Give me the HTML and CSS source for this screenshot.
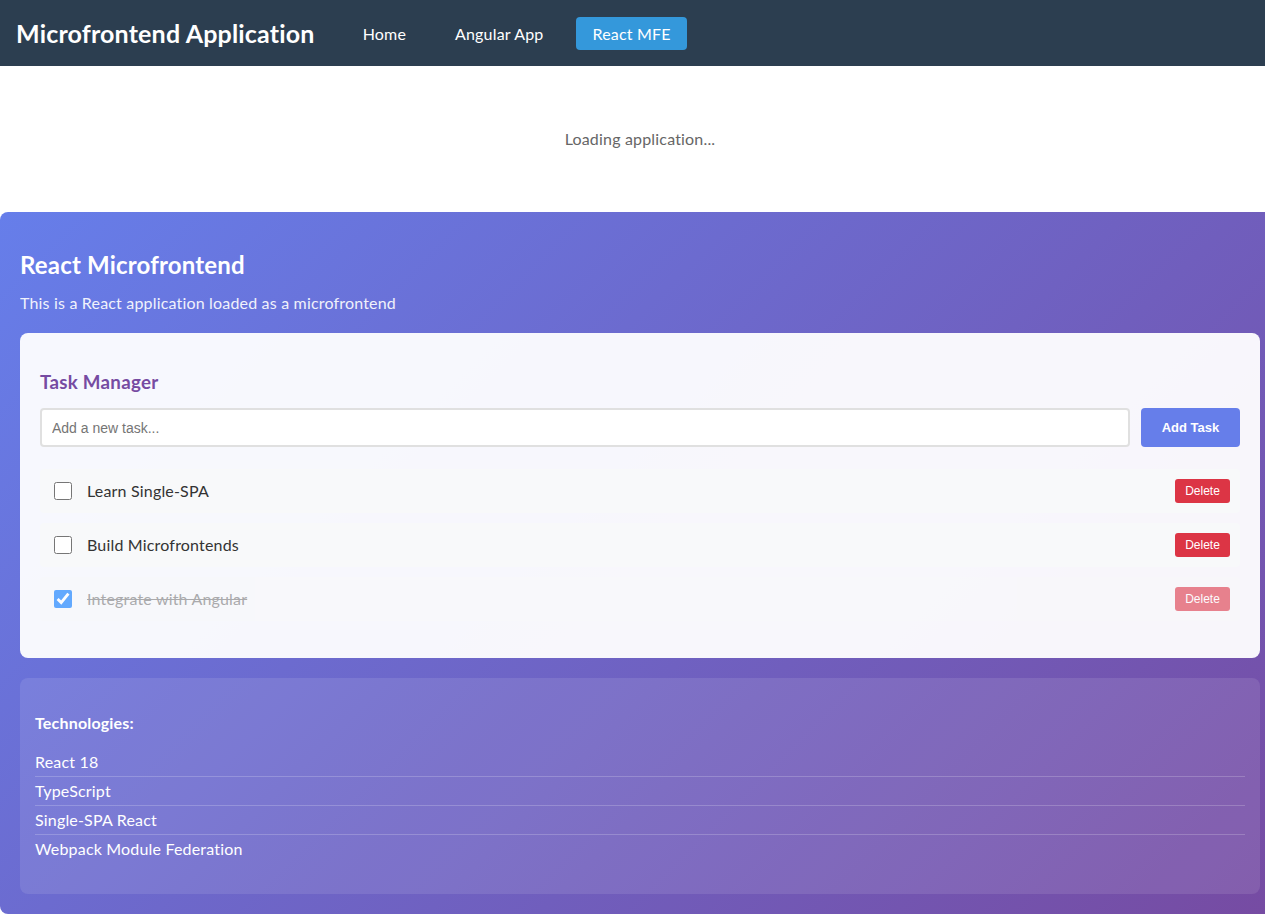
FILE: index.html
```html
<!DOCTYPE html>
<html lang="en">
<head>
<meta charset="utf-8">
<title>Microfrontend Application</title>
<link rel="stylesheet" href="styles.css">
</head>
<body>
<header class="topbar">
  <h1 class="brand">Microfrontend Application</h1>
  <nav class="nav">
    <a class="nav-link" href="#">Home</a>
    <a class="nav-link" href="#">Angular App</a>
    <a class="nav-link active" href="#">React MFE</a>
  </nav>
</header>
<main class="main">
  <div class="loading">Loading application...</div>
  <section class="mfe">
    <h2 class="mfe-title">React Microfrontend</h2>
    <p class="mfe-sub">This is a React application loaded as a microfrontend</p>
    <div class="task-card">
      <h3 class="task-title">Task Manager</h3>
      <div class="task-input-row">
        <input class="task-input" type="text" placeholder="Add a new task...">
        <button class="add-btn" type="button">Add Task</button>
      </div>
      <ul class="task-list">
        <li class="task">
          <input class="task-check" type="checkbox">
          <span class="task-text">Learn Single-SPA</span>
          <button class="del-btn" type="button">Delete</button>
        </li>
        <li class="task">
          <input class="task-check" type="checkbox">
          <span class="task-text">Build Microfrontends</span>
          <button class="del-btn" type="button">Delete</button>
        </li>
        <li class="task done">
          <input class="task-check" type="checkbox" checked>
          <span class="task-text">Integrate with Angular</span>
          <button class="del-btn" type="button">Delete</button>
        </li>
      </ul>
    </div>
    <div class="tech-card">
      <h4 class="tech-title">Technologies:</h4>
      <ul class="tech-list">
        <li>React 18</li>
        <li>TypeScript</li>
        <li>Single-SPA React</li>
        <li>Webpack Module Federation</li>
      </ul>
    </div>
  </section>
</main>
</body>
</html>
```
FILE: styles.css
```css
html {
  overflow-x: hidden;
}
body {
  margin: 0;
  font-family: Lato, "Open Sans", sans-serif;
  line-height: 1.15;
  letter-spacing: 0.18px;
  color: #333;
  background: #fff;
  overflow-x: hidden;
}
.topbar {
  display: flex;
  align-items: center;
  gap: 32px;
  padding: 16px;
  background: #2c3e50;
  color: #fff;
}
.brand {
  margin: 0;
  font-size: 25px;
  font-weight: 700;
  line-height: 34px;
}
.nav {
  display: flex;
  gap: 17px;
}
.nav-link {
  display: block;
  padding: 8px 16px;
  color: #fff;
  text-decoration: none;
  font-size: 16px;
  line-height: 17px;
  border-radius: 4px;
}
.nav-link.active {
  background: #3498db;
}
.main {
  display: block;
  margin-right: -15px;
}
.loading {
  padding: 64px 0;
  text-align: center;
  color: #666;
  font-size: 16px;
  line-height: 18px;
}
.mfe {
  padding: 20px;
  border-radius: 8px;
  background: linear-gradient(135deg, #667eea 0%, #764ba2 100%);
  color: #fff;
}
.mfe-title {
  margin: 19px 0 15px;
  font-size: 24px;
  line-height: 28px;
}
.mfe-sub {
  margin: 0 0 21px;
  font-size: 16px;
  line-height: 18px;
  opacity: 0.9;
}
.task-card {
  padding: 20px 20px 27px;
  border-radius: 8px;
  background: rgba(255, 255, 255, 0.95);
  color: #333;
}
.task-title {
  margin: 18px 0 15px;
  font-size: 18.7px;
  line-height: 22px;
  letter-spacing: 0.3px;
  color: #764ba2;
}
.task-input-row {
  display: flex;
  gap: 11px;
  margin-bottom: 22px;
}
.task-input {
  flex: 1;
  height: 39px;
  box-sizing: border-box;
  padding: 10px;
  border: 2px solid #e0e0e0;
  border-radius: 4px;
  font-family: "Liberation Sans", Arial, sans-serif;
  font-size: 14px;
  letter-spacing: 0;
  background: #fff;
}
.add-btn {
  width: 99px;
  height: 39px;
  border: 0;
  border-radius: 4px;
  background: #667eea;
  color: #fff;
  font-family: "Liberation Sans", Arial, sans-serif;
  font-size: 13px;
  font-weight: 700;
  letter-spacing: 0;
}
.task-list {
  margin: 0;
  padding: 0;
  list-style: none;
}
.task {
  display: flex;
  align-items: center;
  height: 44px;
  box-sizing: border-box;
  padding: 0 10px 0 14px;
  margin-bottom: 10px;
  border-radius: 4px;
  background: #f8f9fa;
}
.task-check {
  width: 18px;
  height: 18px;
  margin: 0;
}
.task-text {
  flex: 1;
  margin-left: 15px;
  font-size: 16px;
}
.del-btn {
  width: 55px;
  height: 24px;
  padding: 0;
  border: 0;
  border-radius: 3px;
  background: #dc3545;
  color: #fff;
  font-family: "Liberation Sans", Arial, sans-serif;
  font-size: 12px;
  letter-spacing: 0;
}
.task.done {
  opacity: 0.6;
}
.task.done .task-text {
  text-decoration: line-through;
  color: #777;
}
.tech-card {
  margin-top: 20px;
  padding: 15px;
  border-radius: 8px;
  background: rgba(255, 255, 255, 0.1);
}
.tech-title {
  margin: 21px 0 16px;
  font-size: 16px;
  line-height: 18px;
}
.tech-list {
  margin: 0 0 16px;
  padding: 0;
  list-style: none;
}
.tech-list li {
  padding: 5px 0;
  font-size: 16px;
  line-height: 18px;
  border-bottom: 1px solid rgba(255, 255, 255, 0.2);
}
.tech-list li:last-child {
  border-bottom: 0;
}
```
